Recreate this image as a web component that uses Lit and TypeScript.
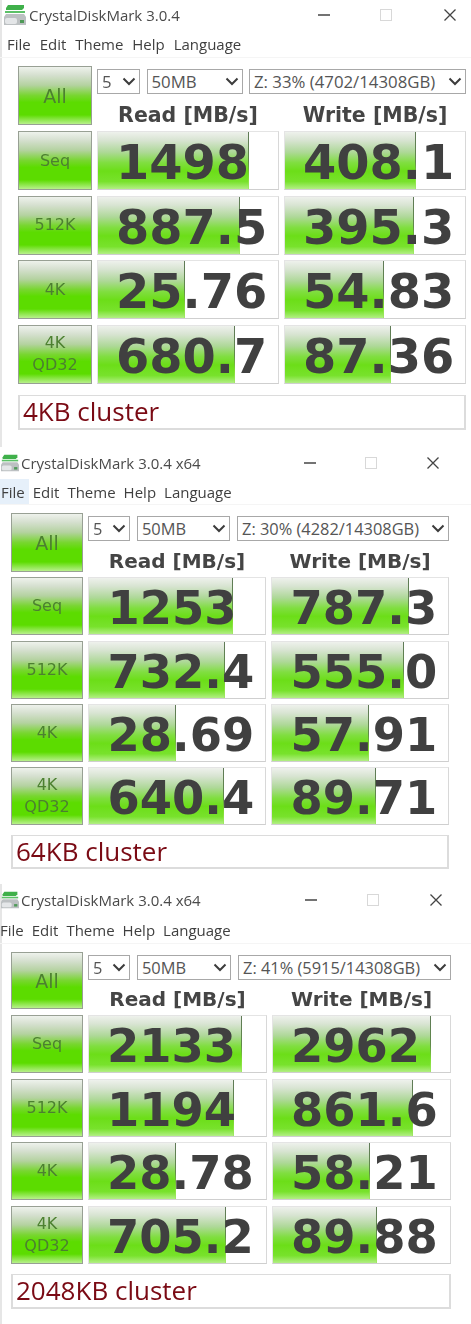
import { LitElement, html, css, svg } from "lit";
import { customElement } from "lit/decorators.js";

type Row = { label: string[]; r: string; rw: number; w: string; ww: number };
type Win = {
  cls: string; title: string; menuHover: boolean;
  sel: string[]; comment: string; rows: Row[];
};

const WINS: Win[] = [
  { cls: "w1", title: "CrystalDiskMark 3.0.4", menuHover: false,
    sel: ["5", "50MB", "Z: 33% (4702/14308GB)"], comment: "4KB cluster",
    rows: [
      { label: ["Seq"], r: "1498", rw: 151, w: "408.1", ww: 131 },
      { label: ["512K"], r: "887.5", rw: 142, w: "395.3", ww: 129 },
      { label: ["4K"], r: "25.76", rw: 87, w: "54.83", ww: 99 },
      { label: ["4K", "QD32"], r: "680.7", rw: 137, w: "87.36", ww: 106 },
    ] },
  { cls: "w2", title: "CrystalDiskMark 3.0.4 x64", menuHover: true,
    sel: ["5", "50MB", "Z: 30% (4282/14308GB)"], comment: "64KB cluster",
    rows: [
      { label: ["Seq"], r: "1253", rw: 144, w: "787.3", ww: 137 },
      { label: ["512K"], r: "732.4", rw: 136, w: "555.0", ww: 132 },
      { label: ["4K"], r: "28.69", rw: 87, w: "57.91", ww: 97 },
      { label: ["4K", "QD32"], r: "640.4", rw: 135, w: "89.71", ww: 104 },
    ] },
  { cls: "w3", title: "CrystalDiskMark 3.0.4 x64", menuHover: false,
    sel: ["5", "50MB", "Z: 41% (5915/14308GB)"], comment: "2048KB cluster",
    rows: [
      { label: ["Seq"], r: "2133", rw: 153, w: "2962", ww: 158 },
      { label: ["512K"], r: "1194", rw: 145, w: "861.6", ww: 140 },
      { label: ["4K"], r: "28.78", rw: 87, w: "58.21", ww: 97 },
      { label: ["4K", "QD32"], r: "705.2", rw: 137, w: "89.88", ww: 104 },
    ] },
];

const chevron = svg`<svg class="chev" viewBox="0 0 14 9" width="14" height="9"><path d="M1.5 1.5 7 7l5.5-5.5" fill="none" stroke="#3c3c3c" stroke-width="2"/></svg>`;

const appIcon = svg`<svg class="icon" viewBox="0 0 22 22">
  <path d="M2 4 4 1h16v3l-2 2H2z" fill="#3fb04a"/>
  <rect x="1" y="7" width="20" height="2" fill="#5cc168"/>
  <path d="M2 10h18l2 3v8H0v-8z" fill="#bcc0c2"/>
  <rect x="1" y="14" width="12" height="6" rx="2" fill="#e4e6e8"/>
  <rect x="16" y="16" width="4" height="3" fill="#4f9a58"/>
</svg>`;

@customElement("app-root")
export class AppRoot extends LitElement {
  static styles = css`
    :host { display: block; width: 471px; background: #fff; overflow: hidden; }
    .win {
      --chrome: "Open Sans", "Noto Sans", sans-serif;
      font-family: var(--chrome);
      filter: blur(0.5px);
      box-sizing: border-box;
    }
    .w1 {
      --left: 18px; --btn: 74px; --cell: 182px; --top: 59px; --row: 59px; --gap: 5.5px; --first: 0.5px;
      --title: 30px; --menu: 28px; --cm: 11px; --ch: 35px; --sel1: 43px; --sel2: 96px;
      --selgap: 6.5px; --num: 47.8px; --hdr: 20.5px; --pad: 18px; --cpad: 8px; --iconx: 4px; --icon: 22px;
      --titlegap: 3px; --minx: 318px; --menux: 7px; --selfont: 16.8px; --menugap: 8.9px;
      --ctl1: 50px; --ctl2: 52px; --bord: #e6e6e6;
      height: 447px; border-left: 2px solid var(--bord);
    }
    .w2 {
      --left: 11px; --btn: 72px; --cell: 178px; --top: 59px; --row: 58px; --gap: 5.33px; --first: 0px;
      --title: 32px; --menu: 26px; --cm: 10px; --ch: 34px; --sel1: 42px; --sel2: 93px;
      --selgap: 7px; --num: 46.4px; --hdr: 20px; --pad: 18.5px; --cpad: 7px; --iconx: 1px; --icon: 18px;
      --titlegap: 2px; --minx: 304px; --menux: 1px; --selfont: 16.4px; --menugap: 8px;
      --ctl1: 49px; --ctl2: 50px; --bord: #f4f4f4;
      height: 437px; border-left: 0;
    }
    .w3 {
      --left: 11px; --btn: 72px; --cell: 179px; --top: 57px; --row: 58px; --gap: 5.67px; --first: 0.33px;
      --title: 32px; --menu: 28px; --cm: 10px; --ch: 35px; --sel1: 42px; --sel2: 94px;
      --selgap: 7px; --num: 46.4px; --hdr: 20px; --pad: 18px; --cpad: 6px; --iconx: 1px; --icon: 18px;
      --titlegap: 2px; --minx: 305px; --menux: -3px; --selfont: 16.4px; --menugap: 8px;
      --ctl1: 50px; --ctl2: 51px; --bord: #e6e6e6;
      height: 440px; border-left: 2px solid var(--bord);
    }
    .w1 .bar-title, .w3 .bar-title { margin-left: -2px; }
    .w1 .menubar, .w3 .menubar { margin-left: -2px; }
    .w1 .grid, .w3 .grid { margin-left: -2px; }

    .bar-title {
      height: var(--title); display: flex; align-items: center;
      padding-left: var(--iconx); font-size: 15px; color: #4a4a4a;
    }
    .icon { flex: none; width: var(--icon); height: var(--icon); margin-right: var(--titlegap); }
    .title-text { width: calc(var(--minx) - var(--iconx) - var(--icon) - var(--titlegap)); flex: none; white-space: nowrap; }
    .ctl { flex: none; display: flex; align-items: center; justify-content: center; width: 12px; }
    .ctl + .ctl { margin-left: var(--ctl1); }
    .ctl.close { margin-left: var(--ctl2); }
    .menubar {
      height: var(--menu); display: flex; align-items: center; box-sizing: border-box;
      padding-left: var(--menux); gap: var(--menugap); font-size: 15px; color: #3f3f3f;
      border-bottom: 1px solid #f5f5f5; white-space: nowrap;
    }
    .menubar span.hover { background: #e6f0fa; align-self: stretch; display: flex; align-items: center; padding: 0 4px 0 2px; margin: 0 -4px 0 -2px; }
    .grid {
      display: grid; padding: 8px 0 0 var(--left);
      grid-template-columns: var(--btn) var(--cell) var(--cell);
      column-gap: 5px; row-gap: var(--gap); align-content: start;
    }
    .btn {
      box-sizing: border-box; height: var(--row); display: flex; flex-direction: column;
      align-items: center; justify-content: center;
      border: 1.5px solid #98a094;
      background: linear-gradient(#eef2ec 0%, #d6e0d0 14%, #b4d2a0 32%, #78d630 50%, #5cdc00 62%, #5cdc00 84%, #b8f08c 100%);
      color: #4c8030; font-family: "DejaVu Sans", sans-serif; font-size: 16px; line-height: 22px;
    }
    .btn.all { height: var(--top); font-size: 19px; margin-bottom: var(--first); }
    .top { grid-column: 2 / 4; display: flex; flex-direction: column; height: var(--top); }
    .selects { display: flex; gap: var(--selgap); margin-top: 3px; height: 25px; flex: none; }
    .sel {
      box-sizing: border-box; height: 25px; border: 1.5px solid #a8a8a8; background: #fff;
      display: flex; align-items: center; justify-content: space-between; padding: 0 3px 0 4px;
      color: #555; font-size: var(--selfont); white-space: nowrap;
    }
    .sel:nth-child(1) { width: var(--sel1); }
    .sel:nth-child(2) { width: var(--sel2); }
    .sel:nth-child(3) { flex: 1; }
    .hdrs { display: grid; grid-template-columns: var(--cell) var(--cell); column-gap: 5px; padding-top: var(--cpad); }
    .hdr { text-align: center; font: bold var(--hdr)/26px "DejaVu Sans", sans-serif; color: #454545; white-space: nowrap; }
    .cell {
      box-sizing: border-box; height: var(--row); display: grid; background: #fff;
      border: 1px solid #e4e4e4; border-right-color: #d8d8d8; border-bottom-color: #cfcfcf;
      overflow: hidden;
    }
    .cell > * { grid-area: 1 / 1; }
    .fill {
      height: 100%; position: relative; box-sizing: border-box;
      background: linear-gradient(#eef1ec 0%, #d8e4d2 14%, #aed898 34%, #80de40 52%, #6cde18 66%, #78e22c 84%, #c2f29c 100%);
    }
    .fill::after {
      content: ""; position: absolute; right: 0; top: 0; bottom: 0; width: 1px;
      background: linear-gradient(#607a58 0%, #5f8a48 50%, #7fdc30 75%, #a8ec70 100%);
    }
    .num {
      position: relative; padding-left: var(--pad); padding-top: 2px; color: #404040;
      font: bold var(--num)/calc(var(--row) - 2px) "DejaVu Sans", sans-serif; white-space: nowrap;
    }
    .comment {
      grid-column: 1 / 4; box-sizing: border-box; height: var(--ch); margin-top: calc(var(--cm) - var(--gap));
      border: 2px solid #dcdcdc; border-top-width: 1.5px; background: #fff; color: #7a0a14;
      font-size: 26px; line-height: 31px; padding-left: 3px; white-space: nowrap;
    }
  `;

  private renderWin(win: Win) {
    const menus = ["File", "Edit", "Theme", "Help", "Language"];
    return html`<section class="win ${win.cls}">
      <div class="bar-title">
        ${appIcon}
        <span class="title-text">${win.title}</span>
        <span class="ctl"><svg width="12" height="12" viewBox="0 0 12 12"><path d="M0 6h12" stroke="#444" stroke-width="1.5"/></svg></span>
        <span class="ctl"><svg width="12" height="12" viewBox="0 0 12 12"><rect x=".5" y=".5" width="11" height="11" fill="none" stroke="#d8d8d8"/></svg></span>
        <span class="ctl close"><svg width="12" height="12" viewBox="0 0 12 12"><path d="M.5.5l11 11M11.5.5l-11 11" stroke="#444" stroke-width="1.3"/></svg></span>
      </div>
      <div class="menubar">
        ${menus.map((m, i) => html`<span class="${win.menuHover && i === 0 ? "hover" : ""}">${m}</span>`)}
      </div>
      <div class="grid">
        <div class="btn all">All</div>
        <div class="top">
          <div class="selects">
            ${win.sel.map((s) => html`<div class="sel"><span>${s}</span>${chevron}</div>`)}
          </div>
          <div class="hdrs">
            <div class="hdr">Read [MB/s]</div>
            <div class="hdr">Write [MB/s]</div>
          </div>
        </div>
        ${win.rows.map((r) => html`
          <div class="btn">${r.label.map((l) => html`<span>${l}</span>`)}</div>
          <div class="cell"><div class="fill" style="width:${r.rw}px"></div><div class="num">${r.r}</div></div>
          <div class="cell"><div class="fill" style="width:${r.ww}px"></div><div class="num">${r.w}</div></div>
        `)}
        <div class="comment">${win.comment}</div>
      </div>
    </section>`;
  }

  render() {
    return html`${WINS.map((w) => this.renderWin(w))}`;
  }
}
